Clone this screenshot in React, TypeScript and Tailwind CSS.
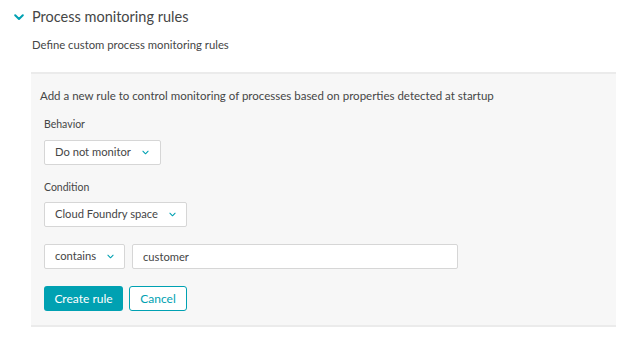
import React from 'react';

const Chevron = ({ className }: { className?: string }) => (
  <svg className={className} viewBox="0 0 8 5" fill="none" stroke="currentColor" strokeWidth="1.2" strokeLinecap="round" strokeLinejoin="round">
    <path d="M1 1l3 3 3-3" />
  </svg>
);

const Select = ({ label, width }: { label: string; width: string }) => (
  <div className={`${width} h-[25px] flex items-center gap-[11px] bg-white border border-[#d6d6d6] rounded-[2px] pl-[10px] text-[11.2px] text-[#454646] whitespace-nowrap`}>
    <span>{label}</span>
    <Chevron className="w-[7px] h-[5px] text-[#00a1b2] shrink-0" />
  </div>
);

export default function App() {
  return (
    <div className="w-[630px] h-[340px] bg-white font-['Lato',sans-serif] text-[#454646]">
      <div className="flex items-center gap-[8px] pl-[14px] pt-[4px] h-[30px]">
        <svg className="w-[10px] h-[7px] text-[#00a1b2]" viewBox="0 0 10 7" fill="none" stroke="currentColor" strokeWidth="2" strokeLinecap="round" strokeLinejoin="round">
          <path d="M1.2 1.2l3.8 3.8 3.8-3.8" />
        </svg>
        <h1 className="text-[14.5px] leading-none">Process monitoring rules</h1>
      </div>
      <p className="pl-[32px] mt-[8px] text-[11.3px] leading-[14px]">Define custom process monitoring rules</p>
      <div className="ml-[31px] mr-[14px] mt-[20px] h-[255px] bg-[#f7f7f7] border-t-2 border-b-2 border-[#ebebeb] pl-[9px] pt-[14px]">
        <p className="text-[11.5px] leading-[16px]">Add a new rule to control monitoring of processes based on properties detected at startup</p>
        <div className="pl-[4px]">
          <p className="mt-[14px] text-[10.5px] leading-[13px]">Behavior</p>
          <div className="mt-[9px]">
            <Select label="Do not monitor" width="w-[117px]" />
          </div>
          <p className="mt-[16px] text-[10.5px] leading-[13px]">Condition</p>
          <div className="mt-[8px]">
            <Select label="Cloud Foundry space" width="w-[143px]" />
          </div>
          <div className="mt-[17px] flex gap-[7px]">
            <Select label="contains" width="w-[81px]" />
            <input
              readOnly
              value="customer"
              className="w-[326px] h-[25px] bg-white border border-[#d6d6d6] rounded-[2px] px-[10px] text-[11.2px] text-[#454646] outline-none"
            />
          </div>
          <div className="mt-[17px] flex gap-[6px]">
            <button className="w-[79px] h-[25px] bg-[#00a1b2] rounded-[3px] text-white text-[12px]">Create rule</button>
            <button className="w-[58px] h-[25px] bg-white border border-[#00a1b2] rounded-[3px] text-[#00a1b2] text-[12px]">Cancel</button>
          </div>
        </div>
      </div>
    </div>
  );
}
